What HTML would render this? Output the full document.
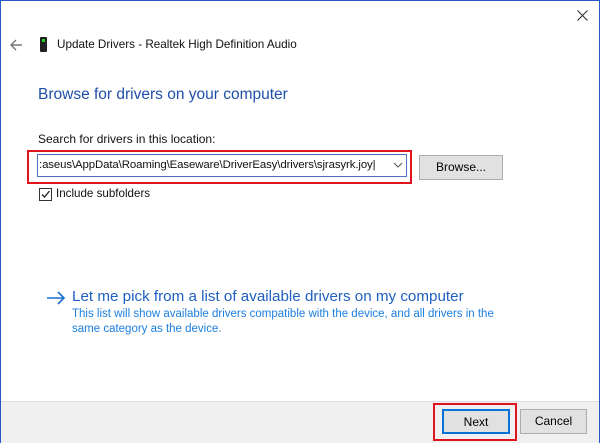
<!DOCTYPE html>
<html><head><style>
body{margin:0;width:600px;height:443px;overflow:hidden;background:#fff;font-family:"Liberation Sans",sans-serif;}
.win{position:absolute;left:0;top:0;width:598px;height:441px;border:1px solid #2b57c4;background:#fff;}
.t{position:absolute;white-space:nowrap;}
.btn{position:absolute;background:#e1e1e1;border:1px solid #adadad;font-size:12px;text-align:center;box-sizing:border-box;}
</style></head><body>
<div class="win">
<svg class="t" style="left:576px;top:9px" width="11" height="11"><path d="M0.5 0.5L10.5 10.5M10.5 0.5L0.5 10.5" stroke="#333" stroke-width="1.1"/></svg>
<svg class="t" style="left:8px;top:38px" width="14" height="12"><path d="M13 6H2M7 1L2 6L7 11" stroke="#777" stroke-width="1.4" fill="none"/></svg>
<div class="t" style="left:39px;top:36px;width:7px;height:15px;background:#222;border-radius:1px"></div>
<div class="t" style="left:41px;top:38px;width:3px;height:3px;background:#2c2"></div>
<div class="t" style="left:56px;top:37px;font-size:11.7px;color:#111;">Update Drivers - Realtek High Definition Audio</div>
<div class="t" style="left:37px;top:85px;font-size:15.5px;color:#1f4fa8;">Browse for drivers on your computer</div>
<div class="t" style="left:37px;top:131px;font-size:12px;color:#111;">Search for drivers in this location:</div>
<div class="t" style="left:26px;top:149px;width:381px;height:30px;border:2px solid #e0141e;"></div>
<div class="t" style="left:36px;top:153px;width:370px;height:23px;border:1px solid #4f6fbf;box-sizing:border-box;background:#fff;"></div>
<div class="t" style="left:38px;top:158px;font-size:11.4px;letter-spacing:-0.1px;color:#111;">:aseus\AppData\Roaming\Easeware\DriverEasy\drivers\sjrasyrk.joy|</div>
<svg class="t" style="left:392px;top:161px" width="10" height="7"><path d="M1 1L5 5L9 1" stroke="#555" fill="none"/></svg>
<div class="btn" style="left:418px;top:154px;width:84px;height:25px;line-height:23px;">Browse...</div>
<div class="t" style="left:38px;top:187px;width:13px;height:13px;border:1px solid #333;box-sizing:border-box;"></div>
<svg class="t" style="left:39px;top:188px" width="11" height="11"><path d="M2 5.5L4.5 8L9.5 2" stroke="#222" stroke-width="1.3" fill="none"/></svg>
<div class="t" style="left:55px;top:186px;font-size:11.6px;color:#111;">Include subfolders</div>
<svg class="t" style="left:45px;top:290px" width="20" height="14"><path d="M1 7H18M12 1L18 7L12 13" stroke="#1a6fd0" stroke-width="1.6" fill="none"/></svg>
<div class="t" style="left:71px;top:287px;font-size:15.2px;color:#1f5fc0;">Let me pick from a list of available drivers on my computer</div>
<div class="t" style="left:71px;top:306px;font-size:11.5px;color:#1b7fe0;line-height:15px;">This list will show available drivers compatible with the device, and all drivers in the<br>same category as the device.</div>
<div class="t" style="left:0;top:400px;width:598px;height:41px;background:#f0f0f0;border-top:1px solid #dfdfdf;"></div>
<div class="t" style="left:432px;top:402px;width:80px;height:34px;border:2px solid #e0141e;"></div>
<div class="btn" style="left:441px;top:408px;width:68px;height:25px;line-height:23px;border:2px solid #0a72d6;">Next</div>
<div class="btn" style="left:519px;top:408px;width:67px;height:25px;line-height:23px;">Cancel</div>
</div>
</body></html>
